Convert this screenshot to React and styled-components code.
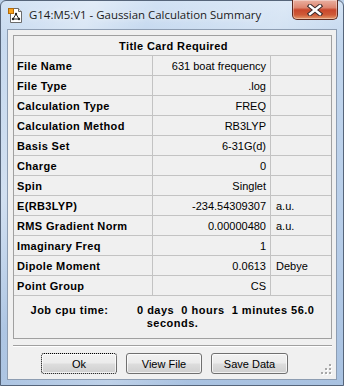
import React from 'react';
import styled, { createGlobalStyle } from 'styled-components';

const Global = createGlobalStyle`
  html, body { margin: 0; padding: 0; width: 344px; height: 386px; overflow: hidden; background: #b9cfe8; }
  *, *::before, *::after { box-sizing: border-box; }
`;

const Window = styled.div`
  position: relative;
  width: 344px;
  height: 386px;
  display: flex;
  flex-direction: column;
  padding: 0 6px 5px 6px;
  border: 1px solid #56657a;
  border-radius: 6px 6px 0 0;
  background:
    linear-gradient(115deg, rgba(255,255,255,0) 0%, rgba(255,255,255,0.35) 18%, rgba(255,255,255,0) 30%, rgba(255,255,255,0.25) 55%, rgba(255,255,255,0) 70%),
    linear-gradient(180deg, #d2e2f4 0%, #c3d7ee 10%, #b7cde8 60%, #a9c2e1 100%);
`;

const TitleBar = styled.div`
  height: 28px;
  display: flex;
  align-items: flex-start;
`;

const AppIcon = styled.svg`
  width: 16px;
  height: 16px;
  margin: 6px 0 0 1px;
  flex: none;
`;

const Caption = styled.div`
  margin: 6px 0 0 5px;
  font-family: "Open Sans", "Noto Sans", sans-serif;
  font-size: 11.45px;
  line-height: 16px;
  color: #1a1a1a;
  white-space: nowrap;
  text-shadow: 0 0 6px rgba(255,255,255,0.9);
`;

const CloseButton = styled.div`
  margin: -1px -1px 0 auto;
  width: 46px;
  height: 20px;
  flex: none;
  display: flex;
  align-items: center;
  justify-content: center;
  border: 1px solid #5e2a20;
  border-top: none;
  border-radius: 0 0 5px 5px;
  background: linear-gradient(180deg, #eab0a1 0%, #dd8670 40%, #c9472c 52%, #cf5a37 78%, #e59a6c 100%);
  box-shadow: inset 0 0 0 1px rgba(255,255,255,0.35);
`;

const Client = styled.div`
  position: relative;
  width: 330px;
  height: 351px;
  border: 1px solid #8d9db2;
  background: #f0f0f0;
  display: flex;
  flex-direction: column;
  padding: 5px 0 0 5px;
  font-family: "Liberation Sans", Arial, sans-serif;
  font-size: 11px;
  color: #000;
`;

const Panel = styled.div`
  width: 319px;
  height: 304px;
  border: 1px solid #a0a0a0;
  display: flex;
  flex-direction: column;
`;

const TitleRow = styled.div`
  height: 20px;
  border-bottom: 1px solid #c3c3c3;
  display: flex;
  align-items: center;
  justify-content: center;
  font-weight: bold;
  padding-left: 2px;
  letter-spacing: 0.4px;
`;

const Grid = styled.div`
  display: grid;
  grid-template-columns: 139px 118px 60px;
  grid-auto-rows: 20px;
`;

const Cell = styled.div`
  display: flex;
  align-items: center;
  border-bottom: 1px solid #c3c3c3;
  border-right: ${p => (p.$last ? 'none' : '1px solid #c3c3c3')};
  justify-content: ${p => (p.$align === 'right' ? 'flex-end' : 'flex-start')};
  padding: ${p => (p.$align === 'right' ? '0 4px 0 0' : p.$unit ? '0 0 0 5px' : '0 0 0 3px')};
  font-weight: ${p => (p.$bold ? 'bold' : 'normal')};
  letter-spacing: ${p => (p.$bold ? '0.35px' : '0')};
  white-space: nowrap;
`;

const JobTime = styled.div`
  flex: 1;
  display: flex;
  align-items: center;
  justify-content: center;
  padding: 0 4px;
  font-weight: bold;
  line-height: 13px;
  letter-spacing: 0.5px;
  text-align: center;
  white-space: pre-wrap;
`;

const Separator = styled.div`
  width: 319px;
  height: 2px;
  margin-top: 6px;
  border-top: 1px solid #a0a0a0;
  border-bottom: 1px solid #ffffff;
`;

const ButtonRow = styled.div`
  display: flex;
  gap: 9px;
  margin: 6px 0 0 28px;
`;

const Button = styled.button`
  width: ${p => p.$w}px;
  height: 21px;
  padding: 0;
  font-family: "Liberation Sans", Arial, sans-serif;
  font-size: 11px;
  color: #000;
  border-radius: 3px;
  border: ${p => (p.$focused ? '1px dotted #000' : '1px solid #707070')};
  background: linear-gradient(180deg, #f2f2f2 0%, #ebebeb 48%, #dddddd 52%, #cfcfcf 100%);
  box-shadow: inset 0 0 0 1px rgba(255,255,255,0.7);
`;

const Grip = styled.svg`
  position: absolute;
  right: 4px;
  bottom: 4px;
  width: 12px;
  height: 12px;
`;

const rows = [
  ['File Name', '631 boat frequency', ''],
  ['File Type', '.log', ''],
  ['Calculation Type', 'FREQ', ''],
  ['Calculation Method', 'RB3LYP', ''],
  ['Basis Set', '6-31G(d)', ''],
  ['Charge', '0', ''],
  ['Spin', 'Singlet', ''],
  ['E(RB3LYP)', '-234.54309307', 'a.u.'],
  ['RMS Gradient Norm', '0.00000480', 'a.u.'],
  ['Imaginary Freq', '1', ''],
  ['Dipole Moment', '0.0613', 'Debye'],
  ['Point Group', 'CS', ''],
];

const gripDots = [[9, 1], [5, 5], [9, 5], [1, 9], [5, 9], [9, 9]];

export default function App() {
  return (
    <>
      <Global />
      <Window>
        <TitleBar>
          <AppIcon viewBox="0 0 16 16">
            <path d="M2.5 1.5 H10.5 L13.5 4.5 V15.5 H2.5 Z" fill="#fff" stroke="#6b6b6b" />
            <path d="M10.5 1.5 V4.5 H13.5" fill="#e6e6e6" stroke="#6b6b6b" />
            <rect x="0.5" y="1.5" width="5" height="5" fill="#f7a21b" stroke="#b46a08" />
            <path d="M8 7 L5 12 M8 7 L11 12 M5 12 H11" stroke="#222" strokeWidth="1" fill="none" />
            <circle cx="8" cy="7" r="1.2" fill="#222" />
            <circle cx="5" cy="12" r="1.2" fill="#222" />
            <circle cx="11" cy="12" r="1.2" fill="#222" />
          </AppIcon>
          <Caption>G14:M5:V1 - Gaussian Calculation Summary</Caption>
          <CloseButton>
            <svg width="16" height="12" viewBox="0 0 16 12">
              <path d="M3 2 L13 10 M13 2 L3 10" stroke="#3a2a2a" strokeWidth="4.4" strokeLinecap="square" />
              <path d="M3 2 L13 10 M13 2 L3 10" stroke="#ffffff" strokeWidth="2.4" strokeLinecap="square" />
            </svg>
          </CloseButton>
        </TitleBar>
        <Client>
          <Panel>
            <TitleRow>Title Card Required</TitleRow>
            <Grid>
              {rows.map(([label, value, unit]) => (
                <React.Fragment key={label}>
                  <Cell $bold>{label}</Cell>
                  <Cell $align="right">{value}</Cell>
                  <Cell $last $unit>{unit}</Cell>
                </React.Fragment>
              ))}
            </Grid>
            <JobTime>{'Job cpu time:        0 days  0 hours  1 minutes 56.0 seconds.'}</JobTime>
          </Panel>
          <Separator />
          <ButtonRow>
            <Button $w={76} $focused>Ok</Button>
            <Button $w={76}>View File</Button>
            <Button $w={77}>Save Data</Button>
          </ButtonRow>
          <Grip viewBox="0 0 12 12">
            {gripDots.map(([x, y]) => (
              <React.Fragment key={`${x}-${y}`}>
                <rect x={x + 1} y={y + 1} width="2" height="2" fill="#ffffff" />
                <rect x={x} y={y} width="2" height="2" fill="#a8a8a8" />
              </React.Fragment>
            ))}
          </Grip>
        </Client>
      </Window>
    </>
  );
}
